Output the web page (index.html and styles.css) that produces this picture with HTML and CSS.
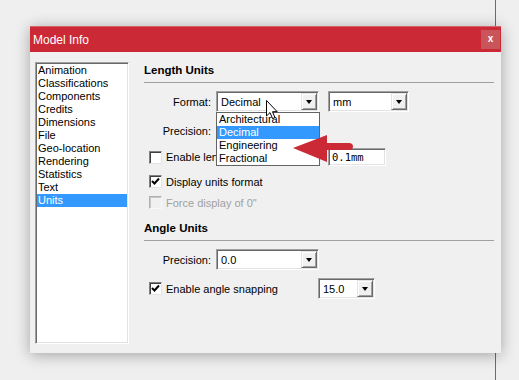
FILE: index.html
```html
<!DOCTYPE html>
<html>
<head>
    <title>Model Info</title>
    <link rel="stylesheet" href="styles.css">
</head>
<body>
    <div class="desk-line"></div>

    <div class="dialog">
        <div class="titlebar">
            <span class="title">Model Info</span>
            <span class="close-btn">x</span>
        </div>

        <div class="dialog-body">
            <ul class="nav-list">
                <li>Animation</li>
                <li>Classifications</li>
                <li>Components</li>
                <li>Credits</li>
                <li>Dimensions</li>
                <li>File</li>
                <li>Geo-location</li>
                <li>Rendering</li>
                <li>Statistics</li>
                <li>Text</li>
                <li class="selected">Units</li>
            </ul>

            <div class="panel">
                <div class="section-title">Length Units</div>

                <div class="form-row row-format">
                    <span class="label">Format:</span>
                    <div class="combo combo-wide"><span class="combo-text">Decimal</span><span class="combo-btn"><i class="tri"></i></span></div>
                    <div class="combo combo-unit"><span class="combo-text">mm</span><span class="combo-btn"><i class="tri"></i></span></div>
                </div>

                <div class="form-row row-precision">
                    <span class="label">Precision:</span>
                    <div class="combo combo-wide"><span class="combo-text"></span><span class="combo-btn"><i class="tri"></i></span></div>
                </div>

                <div class="check-row row-snap">
                    <span class="checkbox"></span>
                    <span class="check-label snap-label">Enable length snapping</span>
                    <div class="textbox">0.1mm</div>
                </div>

                <div class="check-row row-display">
                    <span class="checkbox checked"><svg width="11" height="11" viewBox="0 0 11 11"><path d="M2 5 L4.5 7.5 L9 2.5" fill="none" stroke="#000" stroke-width="2"/></svg></span>
                    <span class="check-label">Display units format</span>
                </div>

                <div class="check-row row-force disabled">
                    <span class="checkbox"></span>
                    <span class="check-label">Force display of 0"</span>
                </div>

                <div class="section-title section-angle">Angle Units</div>

                <div class="form-row row-angle-precision">
                    <span class="label">Precision:</span>
                    <div class="combo combo-wide"><span class="combo-text">0.0</span><span class="combo-btn"><i class="tri"></i></span></div>
                </div>

                <div class="check-row row-angle-snap">
                    <span class="checkbox checked"><svg width="11" height="11" viewBox="0 0 11 11"><path d="M2 5 L4.5 7.5 L9 2.5" fill="none" stroke="#000" stroke-width="2"/></svg></span>
                    <span class="check-label angle-label">Enable angle snapping</span>
                    <div class="combo combo-small"><span class="combo-text">15.0</span><span class="combo-btn"><i class="tri"></i></span></div>
                </div>
            </div>
        </div>

        <!-- open dropdown of the Format combo -->
        <ul class="dropdown">
            <li>Architectural</li>
            <li class="selected">Decimal</li>
            <li>Engineering</li>
            <li>Fractional</li>
        </ul>

        <svg class="red-arrow" width="64" height="32" viewBox="0 0 64 32">
            <path d="M3 16 L37 3 L37 11 L59 11 Q63 11 63 14.5 Q63 18 59 18 L37 18 L37 30 Z" fill="#cc2936"/>
        </svg>

        <svg class="cursor" width="13" height="20" viewBox="0 0 13 20">
            <path d="M0.5 0.5 L0.5 16 L4 12.6 L6.6 18.6 L9 17.6 L6.5 11.7 L11.2 11.7 Z" fill="#fff" stroke="#000" stroke-width="1"/>
        </svg>
    </div>
</body>
</html>
```

FILE: styles.css
```css
body {
    margin: 0;
    width: 519px;
    height: 380px;
    overflow: hidden;
    padding: 26px 0 0 30px;
    box-sizing: border-box;
    background-color: #efefef;
    font-family: "Liberation Sans", Arial, sans-serif;
    font-size: 11px;
    color: #000;
}
.desk-line {
    position: absolute;
    left: 495px;
    top: 0;
    width: 1px;
    height: 380px;
    background-color: #22a022;
}
.dialog {
    position: relative;
    width: 471px;
    height: 327px;
    background-color: #f0f0f0;
    box-shadow: 0 2px 14px rgba(0, 0, 0, 0.32);
}
.titlebar {
    display: flex;
    align-items: center;
    justify-content: space-between;
    height: 26px;
    box-sizing: border-box;
    padding: 0 1px 0 3px;
    background-color: #cc2936;
    border-top: 1px solid #d8616a;
}
.title {
    color: #fff;
    font-size: 12px;
}
.close-btn {
    width: 19px;
    height: 19px;
    line-height: 18px;
    text-align: center;
    background-color: #c9555b;
    color: #fff;
    font-weight: bold;
    font-size: 10px;
}
.dialog-body {
    display: flex;
    padding: 10px 0 9px 5px;
}
.nav-list {
    list-style: none;
    margin: 0;
    padding: 1px;
    width: 94px;
    height: 282px;
    box-sizing: border-box;
    background-color: #fff;
    border: 1px solid;
    border-color: #a0a0a0 #fff #fff #a0a0a0;
    box-shadow: inset 1px 1px 0 #696969, inset -1px -1px 0 #e3e3e3;
}
.nav-list li {
    height: 13px;
    line-height: 13px;
    padding-left: 1px;
}
.nav-list li.selected,
.dropdown li.selected {
    background-color: #3399ff;
    color: #fff;
}
.panel {
    margin-left: 15px;
    width: 350px;
}
.section-title {
    font-weight: bold;
    font-size: 11.5px;
    line-height: 13px;
    padding: 2px 0 5px;
    border-bottom: 1px solid #a0a0a0;
}
.section-angle {
    margin-top: 11px;
    padding-bottom: 5px;
}
.form-row {
    display: flex;
    align-items: center;
    height: 21px;
    margin-top: 8px;
}
.label {
    width: 67px;
    margin-right: 5px;
    text-align: right;
}
.combo {
    display: flex;
    align-items: center;
    justify-content: space-between;
    height: 21px;
    box-sizing: border-box;
    padding: 1px;
    background-color: #fff;
    border: 1px solid;
    border-color: #a0a0a0 #fff #fff #a0a0a0;
    box-shadow: inset 1px 1px 0 #696969, inset -1px -1px 0 #e3e3e3;
}
.combo-wide {
    width: 103px;
}
.combo-unit {
    width: 81px;
    margin-left: 9px;
}
.combo-small {
    width: 57px;
}
.combo-text {
    padding-left: 3px;
}
.combo-btn {
    display: flex;
    align-items: center;
    justify-content: center;
    width: 16px;
    height: 17px;
    box-sizing: border-box;
    background-color: #f0f0f0;
    border: 1px solid;
    border-color: #e3e3e3 #696969 #696969 #e3e3e3;
    box-shadow: inset 1px 1px 0 #fff, inset -1px -1px 0 #a0a0a0;
}
.tri {
    width: 0;
    height: 0;
    border-left: 3.5px solid transparent;
    border-right: 3.5px solid transparent;
    border-top: 4px solid #000;
}
.check-row {
    display: flex;
    align-items: center;
    padding-left: 5px;
}
.checkbox {
    display: flex;
    align-items: center;
    justify-content: center;
    width: 13px;
    height: 13px;
    box-sizing: border-box;
    background-color: #fff;
    border: 1px solid;
    border-color: #808080 #e3e3e3 #e3e3e3 #808080;
    box-shadow: inset 1px 1px 0 #404040;
}
.check-label {
    margin-left: 4px;
    white-space: nowrap;
    overflow: hidden;
}
.row-snap {
    height: 18px;
    margin-top: 7px;
}
/* the open dropdown covers the rest of this label */
.snap-label {
    width: 50px;
    margin-right: 112px;
}
.row-display {
    height: 13px;
    margin-top: 9px;
}
.row-force {
    height: 13px;
    margin-top: 8px;
}
.disabled .checkbox {
    background-color: #f0f0f0;
    border-color: #b0b0b0 #f8f8f8 #f8f8f8 #b0b0b0;
    box-shadow: inset 1px 1px 0 #c8c8c8;
}
.disabled .check-label {
    color: #a0a0a0;
}
.row-angle-snap {
    height: 21px;
    margin-top: 8px;
}
.angle-label {
    width: 152px;
}
.textbox {
    width: 58px;
    height: 18px;
    line-height: 16px;
    box-sizing: border-box;
    padding-left: 3px;
    background-color: #fff;
    border: 1px solid;
    border-color: #a0a0a0 #fff #fff #a0a0a0;
    box-shadow: inset 1px 1px 0 #696969, inset -1px -1px 0 #e3e3e3;
    font-family: "DejaVu Sans Mono", monospace;
    font-size: 10.5px;
}
.dropdown {
    position: absolute;
    left: 186px;
    top: 86px;
    width: 104px;
    height: 54px;
    box-sizing: border-box;
    margin: 0;
    padding: 0;
    list-style: none;
    background-color: #fff;
    border: 1px solid #646464;
}
.dropdown li {
    height: 13px;
    line-height: 13px;
    padding-left: 2px;
}
.red-arrow {
    position: absolute;
    left: 260px;
    top: 106px;
}
.cursor {
    position: absolute;
    left: 236px;
    top: 74px;
}
```
